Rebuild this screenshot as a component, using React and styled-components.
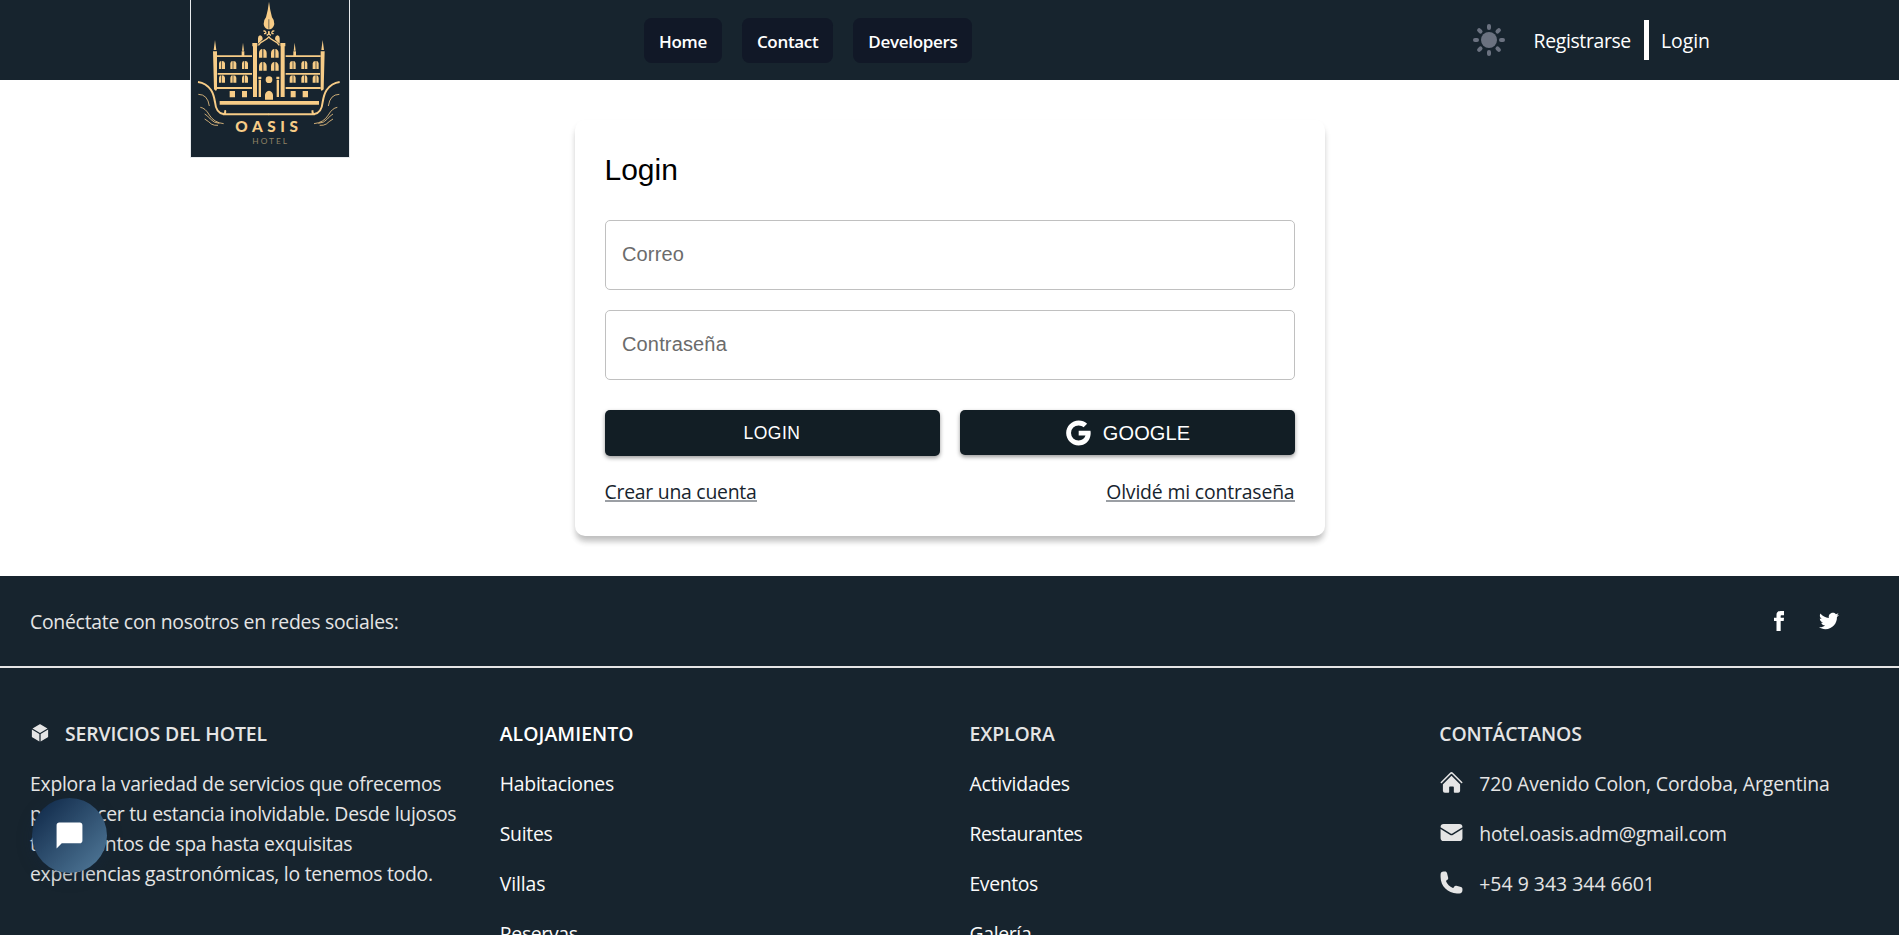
import React from "react";
import styled, { createGlobalStyle, css } from "styled-components";

const navy = "#17242e";

const GlobalStyle = createGlobalStyle`
  *, *::before, *::after { box-sizing: border-box; }
  html { font-size: 20px; }
  body {
    margin: 0;
    height: 100vh;
    overflow: hidden;
    background: #fff;
    color: #fff;
    font-family: "Open Sans", "Noto Sans", sans-serif;
    font-size: 19.4px;
    line-height: 30px;
  }
  a { color: inherit; text-decoration: none; }
  svg { display: block; flex: none; }
`;

const Page = styled.div`
  height: 100vh;
  overflow: hidden;
`;

/* Header */

const Header = styled.header`
  display: flex;
  align-items: center;
  height: 80px;
  padding: 0 189px 0 190px;
  background: ${navy};
`;

const LogoLink = styled.a`
  align-self: flex-start;
  position: relative;
  z-index: 1;
  width: 160px;
  height: 158px;
  flex: none;
`;

const Nav = styled.nav`
  display: flex;
  gap: 20px;
  margin-left: 294px;
`;

const NavLink = styled.a`
  padding: 11px 15px 9px;
  border-radius: 7.5px;
  background: #111827;
  font-size: 17px;
  font-weight: 600;
  line-height: 25px;
  letter-spacing: -0.32px;
`;

const Account = styled.div`
  display: flex;
  align-items: center;
  margin-left: auto;
`;

const ThemeToggle = styled.button`
  display: flex;
  margin: 0 29px 0 0;
  padding: 0;
  border: 0;
  background: none;
`;

const AccountLink = styled.a`
  letter-spacing: ${(p) => p.$spacing || "0"};
  padding-top: 2px;
`;

const Divider = styled.span`
  width: 5px;
  height: 40px;
  margin: 0 12px 0 13px;
  background: #fff;
`;

/* Login card */

const Main = styled.main`
  display: flex;
  justify-content: center;
  padding: 40px 0;
`;

const Card = styled.form`
  width: 750px;
  height: 416px;
  padding: 30px;
  border-radius: 10px;
  background: #fff;
  color: #000;
  box-shadow: 0 7px 6px -2px rgba(0, 0, 0, 0.16), 0 5px 6px rgba(0, 0, 0, 0.12);
`;

const Title = styled.h1`
  margin: 0 0 30px;
  font: 400 30px/40px "Liberation Sans", Arial, sans-serif;
`;

const Field = styled.input`
  display: block;
  width: 100%;
  height: 70px;
  margin-bottom: 20px;
  padding: 0 16.5px 2px;
  border: 1px solid #c0c0c0;
  border-radius: 5px;
  outline: 0;
  background: transparent;
  font: 400 20px/30px "Liberation Sans", Arial, sans-serif;
  letter-spacing: 0.15px;
  &::placeholder { color: #6b6b6b; opacity: 1; }
`;

const Actions = styled.div`
  display: grid;
  grid-template-columns: 1fr 1fr;
  align-items: start;
  gap: 20px;
  margin-top: 30px;
`;

const Button = styled.button`
  display: flex;
  align-items: center;
  justify-content: center;
  gap: 10px;
  height: 46px;
  padding: 0;
  border: 0;
  border-radius: 5px;
  background: #121e25;
  color: #fff;
  font: 400 17.5px/30px "Liberation Sans", Arial, sans-serif;
  letter-spacing: 0.5px;
  box-shadow: 0 2px 4px rgba(0, 0, 0, 0.4);
  ${(p) => p.$provider && css`
    height: 45px;
    padding-right: 1px;
    font-size: 20px;
    letter-spacing: 0.1px;
  `}
`;

const CardLinks = styled.div`
  display: flex;
  justify-content: space-between;
  margin-top: 21px;
`;

const CardLink = styled.a`
  height: 25px;
  border-bottom: 2px solid #9b9fa4;
  color: #17242e;
  font-weight: 375;
  letter-spacing: ${(p) => p.$spacing};
`;

/* Footer */

const Footer = styled.footer`
  height: 700px;
  background: ${navy};
  color: #e5e5e5;
`;

const SocialBar = styled.div`
  display: flex;
  align-items: center;
  justify-content: space-between;
  height: 92px;
  padding: 0 30px;
  border-bottom: 2px solid #e5e5e5;
  letter-spacing: -0.26px;
`;

const SocialLabel = styled.span`
  padding-top: 2px;
`;

const SocialLinks = styled.div`
  display: flex;
  color: #fff;
  a { margin-right: 30px; }
`;

const Columns = styled.div`
  display: grid;
  grid-template-columns: repeat(4, minmax(0, 1fr));
  gap: 40px;
  padding: 51px 30px;
`;

const Heading = styled.h2`
  display: flex;
  align-items: center;
  gap: 15px;
  margin: 0 0 20px;
  color: ${(p) => (p.$bright ? "#fff" : "inherit")};
  font-size: 19.4px;
  font-weight: 600;
  line-height: 30px;
  letter-spacing: ${(p) => p.$spacing || "-0.1px"};
  svg { margin-top: -2px; }
`;

const Blurb = styled.p`
  margin: 0;
  letter-spacing: -0.27px;
`;

const Item = styled.p`
  display: flex;
  align-items: center;
  gap: 15px;
  margin: 0 0 20px;
  color: ${(p) => (p.$bright ? "#fafafa" : "inherit")};
  letter-spacing: ${(p) => p.$spacing || "-0.2px"};
  svg { margin: -3px 0.5px 0 -0.5px; }
`;

const ChatButton = styled.button`
  position: fixed;
  left: 32px;
  bottom: 62px;
  display: flex;
  align-items: center;
  justify-content: center;
  width: 75px;
  height: 75px;
  padding: 0 1px 0 0;
  border: 0;
  border-radius: 50%;
  background: linear-gradient(135deg, #132d4d 10%, #4f7797 95%);
  color: #fff;
  box-shadow: 0 4px 15px rgba(20, 40, 65, 0.35);
`;

/* Drawings */

const Icon = ({ size = 25, children }) => (
  <svg width={size} height={size} viewBox="0 0 24 24" fill="currentColor">{children}</svg>
);

const Sun = () => (
  <svg width="32" height="32" viewBox="-16 -16 32 32" fill="#6b7280">
    <circle r="8" />
    {[0, 45, 90, 135, 180, 225, 270, 315].map((a) => (
      <rect key={a} x="-2" y="-16" width="4" height="6" rx="2" transform={`rotate(${a})`} />
    ))}
  </svg>
);

const Half = () => (
  <g fill="#f7cc87">
    <path d="M99 154h12v114l-3 5-6-5zM105 120l4 30h-8zM185 154h8v14h-8zM189 128l3 24h-6z" />
    <path d="M111 166h105v5H111zM113 219h103v5H113zM111 261h105v6H111z" />
    <path d="M219 139h12v152h-12zM217 129h15v10h-15z" />
    <path d="M234 131v-16q0-8 6-9 8 2 8 12l-7 7z" />
    <path d="M236 239h7v52h-7zM235 230h9v7h-9z" />
    {[117, 151, 186].map((x) => (
      <g key={x}>
        <path d={`M${x} 207v-17q1-7 7-7v24zM${x + 9} 207v-24q8 0 9 7v17z`} />
        <path d={`M${x} 248v-15q1-7 7-7v22zM${x + 9} 248v-22q8 0 9 7v15z`} />
      </g>
    ))}
    <path d="M149 273h16v19h-16zM186 273h15v19h-15z" />
    <path d="M237 173v-14q1-11 10-12v26zM250 173v-26q9 1 10 12v14zM237 212v-14q1-11 10-12v26zM250 212v-26q9 1 10 12v14z" />
    <g fill="none" stroke="#f7cc87">
      <path d="M267 110q-5 8-15 12-12 5-17 14M250 94q4-3 7 2t-5 5M266 94v8l-6 4" strokeWidth="4" />
      <path d="M54 246q24 3 39 24 8 12 12 36 3 34 27 37h135M128 343q10-2 7-12" strokeWidth="6" />
      <path d="M55 283q28 0 33 35M61 322q15 2 27 23 14 23 43 26M74 342q9 5 17 15 10 12 27 13M74 357q13 8 20 15 8 5 20 4" strokeWidth="3" opacity=".8" />
    </g>
  </g>
);

const LogoText = styled.text`
  font-family: Lato, sans-serif;
  fill: ${(p) => p.$color};
  font-size: ${(p) => p.$size}px;
  font-weight: ${(p) => p.$weight};
`;

const Logo = () => (
  <svg width="160" height="158" viewBox="30 0 480 474">
    <path d="M30 0h480v474H30z" fill="#e8ebee" />
    <path d="M33 0h474v471H33z" fill="#17242f" />
    <Half />
    <g transform="translate(533 0) scale(-1 1)"><Half /></g>
    <g fill="#f7cc87">
      <path d="M267 5q3 25 9 47 8 9 7 20-2 12-12 16h-8q-11-4-12-16-1-11 7-20 6-22 9-47z" />
      <circle cx="267" cy="239" r="10" />
      <path d="M255 299v-14q1-11 12-13 11 2 12 13v14zM119 303h298v11H119z" />
      <path d="M265 58h3v28h-3z" fill="#3a4042" opacity=".7" />
    </g>
    <LogoText x="166" y="395" textLength="188" lengthAdjust="spacing" $size="46" $weight="900" $color="#f7cc87">OASIS</LogoText>
    <LogoText x="217" y="431" textLength="104" lengthAdjust="spacing" $size="25" $weight="400" $color="#8f8264">HOTEL</LogoText>
  </svg>
);

const lodging = [["Habitaciones", "-0.27px"], ["Suites", "-0.3px"], ["Villas", "-0.1px"], ["Reservas", "-0.35px"]];
const explore = [["Actividades", "-0.2px"], ["Restaurantes", "-0.55px"], ["Eventos", "-0.4px"], ["Galería", "-0.35px"]];

export default function App() {
  return (
    <Page>
      <GlobalStyle />
      <Header>
        <LogoLink href="#"><Logo /></LogoLink>
        <Nav>
          <NavLink href="#">Home</NavLink>
          <NavLink href="#">Contact</NavLink>
          <NavLink href="#">Developers</NavLink>
        </Nav>
        <Account>
          <ThemeToggle type="button" aria-label="Tema"><Sun /></ThemeToggle>
          <AccountLink href="#" $spacing="-0.35px">Registrarse</AccountLink>
          <Divider />
          <AccountLink href="#">Login</AccountLink>
        </Account>
      </Header>

      <Main>
        <Card>
          <Title>Login</Title>
          <Field placeholder="Correo" />
          <Field type="password" placeholder="Contraseña" />
          <Actions>
            <Button type="button">LOGIN</Button>
            <Button type="button" $provider>
              <Icon size={30}>
                <path d="M12.545 10.239v3.821h5.445c-.712 2.315-2.647 3.972-5.445 3.972a6.033 6.033 0 1 1 0-12.064c1.498 0 2.866.549 3.921 1.453l2.814-2.814A9.969 9.969 0 0 0 12.545 2C7.021 2 2.543 6.477 2.543 12s4.478 10 10.002 10c8.396 0 10.249-7.85 9.426-11.748l-9.426-.013z" />
              </Icon>
              GOOGLE
            </Button>
          </Actions>
          <CardLinks>
            <CardLink href="#" $spacing="-0.25px">Crear una cuenta</CardLink>
            <CardLink href="#" $spacing="-0.16px">Olvidé mi contraseña</CardLink>
          </CardLinks>
        </Card>
      </Main>

      <Footer>
        <SocialBar>
          <SocialLabel>Conéctate con nosotros en redes sociales:</SocialLabel>
          <SocialLinks>
            <a href="#" aria-label="Facebook">
              <Icon size={20}>
                <path d="M9 8h-3v4h3v12h5v-12h3.642l.358-4h-4v-1.667c0-.955.192-1.333 1.115-1.333h2.885v-5h-3.808c-3.596 0-5.192 1.583-5.192 4.615v3.385z" />
              </Icon>
            </a>
            <a href="#" aria-label="Twitter">
              <Icon size={20}>
                <path d="M24 4.557c-.883.392-1.832.656-2.828.775 1.017-.609 1.798-1.574 2.165-2.724-.951.564-2.005.974-3.127 1.195-.897-.957-2.178-1.555-3.594-1.555-3.179 0-5.515 2.966-4.797 6.045-4.091-.205-7.719-2.165-10.148-5.144-1.29 2.213-.669 5.108 1.523 6.574-.806-.026-1.566-.247-2.229-.616-.054 2.281 1.581 4.415 3.949 4.89-.693.188-1.452.232-2.224.084.626 1.956 2.444 3.379 4.6 3.419-2.07 1.623-4.678 2.348-7.29 2.04 2.179 1.397 4.768 2.212 7.548 2.212 9.142 0 14.307-7.721 13.995-14.646.962-.695 1.797-1.562 2.457-2.549z" />
              </Icon>
            </a>
          </SocialLinks>
        </SocialBar>

        <Columns>
          <div>
            <Heading>
              <Icon size={20}>
                <path d="M12.378 1.602a.75.75 0 0 0-.756 0L3 6.632l9 5.25 9-5.25-8.622-5.03zM21.75 7.93l-9 5.25v9l8.628-5.032a.75.75 0 0 0 .372-.648V7.93zM11.25 22.18v-9l-9-5.25v8.57a.75.75 0 0 0 .372.648l8.628 5.033z" />
              </Icon>
              SERVICIOS DEL HOTEL
            </Heading>
            <Blurb>
              Explora la variedad de servicios que ofrecemos<br />
              para hacer tu estancia inolvidable. Desde lujosos<br />
              tratamientos de spa hasta exquisitas<br />
              experiencias gastronómicas, lo tenemos todo.
            </Blurb>
          </div>
          <div>
            <Heading $bright $spacing="0.05px">ALOJAMIENTO</Heading>
            {lodging.map(([name, spacing]) => <Item key={name} $bright $spacing={spacing}>{name}</Item>)}
          </div>
          <div>
            <Heading $spacing="-0.1px">EXPLORA</Heading>
            {explore.map(([name, spacing]) => <Item key={name} $bright $spacing={spacing}>{name}</Item>)}
          </div>
          <div>
            <Heading>CONTÁCTANOS</Heading>
            <Item $spacing="-0.12px">
              <Icon>
                <path d="M11.47 3.84a.75.75 0 0 1 1.06 0l8.69 8.69a.75.75 0 1 0 1.06-1.06l-8.689-8.69a2.25 2.25 0 0 0-3.182 0l-8.69 8.69a.75.75 0 0 0 1.061 1.06l8.69-8.69z" />
                <path d="M12 5.432l8.159 8.159c.03.03.06.058.091.086v6.198c0 1.035-.84 1.875-1.875 1.875H15a.75.75 0 0 1-.75-.75v-4.5a.75.75 0 0 0-.75-.75h-3a.75.75 0 0 0-.75.75V21a.75.75 0 0 1-.75.75H5.625a1.875 1.875 0 0 1-1.875-1.875v-6.198a2.29 2.29 0 0 0 .091-.086L12 5.43z" />
              </Icon>
              720 Avenido Colon, Cordoba, Argentina
            </Item>
            <Item $spacing="-0.23px">
              <Icon>
                <path d="M1.5 8.67v8.58a3 3 0 0 0 3 3h15a3 3 0 0 0 3-3V8.67l-8.928 5.493a3 3 0 0 1-3.144 0L1.5 8.67z" />
                <path d="M22.5 6.908V6.75a3 3 0 0 0-3-3h-15a3 3 0 0 0-3 3v.158l9.714 5.978a1.5 1.5 0 0 0 1.572 0L22.5 6.908z" />
              </Icon>
              hotel.oasis.adm@gmail.com
            </Item>
            <Item $spacing="0.02px">
              <Icon>
                <path d="M1.5 4.5a3 3 0 0 1 3-3h1.372c.86 0 1.61.586 1.819 1.42l1.105 4.423a1.875 1.875 0 0 1-.694 1.955l-1.293.97c-.135.101-.164.249-.126.352a11.285 11.285 0 0 0 6.697 6.697c.103.038.25.009.352-.126l.97-1.293a1.875 1.875 0 0 1 1.955-.694l4.423 1.105c.834.209 1.42.959 1.42 1.82V19.5a3 3 0 0 1-3 3h-2.25C8.552 22.5 1.5 15.448 1.5 6.75V4.5z" />
              </Icon>
              +54 9 343 344 6601
            </Item>
          </div>
        </Columns>
      </Footer>

      <ChatButton type="button" aria-label="Chat">
        <Icon size={31}>
          <path d="M20 2H4c-1.1 0-2 .9-2 2v18l4-4h14c1.1 0 2-.9 2-2V4c0-1.1-.9-2-2-2z" />
        </Icon>
      </ChatButton>
    </Page>
  );
}
